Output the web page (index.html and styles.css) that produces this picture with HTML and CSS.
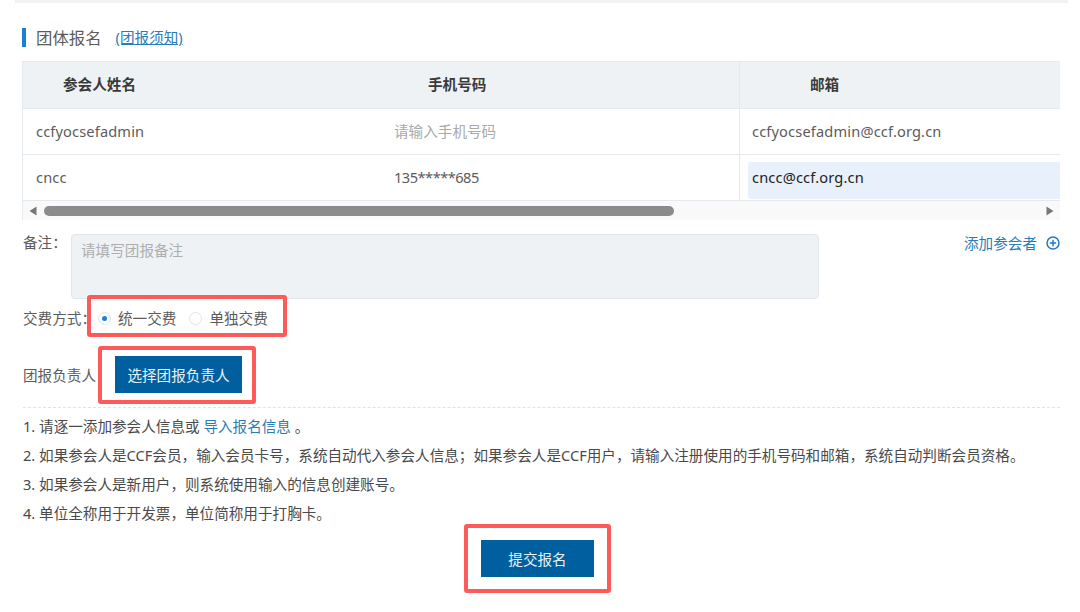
FILE: index.html
```html
<!DOCTYPE html>
<html lang="zh-CN">
<head>
<meta charset="utf-8">
<title>团体报名</title>
<link rel="stylesheet" href="styles.css">
</head>
<body>
<main class="page">
  <div class="top-rule"></div>
  <div class="content">
    <h2 class="section-title"><span class="title-text">团体报名</span><a class="notice-link" href="#">(团报须知)</a></h2>

    <div class="table">
      <div class="row head">
        <div class="cell name">参会人姓名</div>
        <div class="cell phone">手机号码</div>
        <div class="cell email">邮箱</div>
      </div>
      <div class="row">
        <div class="cell name">ccfyocsefadmin</div>
        <div class="cell phone placeholder">请输入手机号码</div>
        <div class="cell email">ccfyocsefadmin@ccf.org.cn</div>
      </div>
      <div class="row">
        <div class="cell name">cncc</div>
        <div class="cell phone masked-number">135*****685</div>
        <div class="cell email"><span class="autofill">cncc@ccf.org.cn</span></div>
      </div>
      <div class="scrollbar">
        <svg class="arrow" width="8" height="10" viewBox="0 0 8 10"><path d="M7.5 0.5V9.5L0.5 5Z" fill="#777"/></svg>
        <div class="thumb"></div>
        <svg class="arrow" width="8" height="10" viewBox="0 0 8 10"><path d="M0.5 0.5V9.5L7.5 5Z" fill="#777"/></svg>
      </div>
    </div>

    <div class="remark-row">
      <span class="remark-label">备注&#65306;</span>
      <div class="remark-box">请填写团报备注</div>
      <a class="add-link" href="#">添加参会者
        <svg width="14" height="14" viewBox="0 0 14 14"><circle cx="7" cy="7" r="6" fill="none" stroke="#1f7bc4" stroke-width="1.5"/><path d="M3.8 7H10.2M7 3.8V10.2" stroke="#1f7bc4" stroke-width="1.5"/></svg>
      </a>
    </div>

    <div class="pay-row">
      <span class="pay-label">交费方式&#65306;</span>
      <div class="radios marked">
        <span class="radio checked"></span><span class="radio-text first">统一交费</span>
        <span class="radio"></span><span class="radio-text">单独交费</span>
      </div>
    </div>

    <div class="leader-row">
      <span class="leader-label">团报负责人</span>
      <button class="btn leader-btn marked" type="button">选择团报负责人</button>
    </div>

    <ol class="notes">
      <li>1. 请逐一添加参会人信息或 <a href="#">导入报名信息</a> 。</li>
      <li>2. 如果参会人是CCF会员&#65292;输入会员卡号&#65292;系统自动代入参会人信息&#65307;如果参会人是CCF用户&#65292;请输入注册使用的手机号码和邮箱&#65292;系统自动判断会员资格。</li>
      <li>3. 如果参会人是新用户&#65292;则系统使用输入的信息创建账号。</li>
      <li>4. 单位全称用于开发票&#65292;单位简称用于打胸卡。</li>
    </ol>

    <div class="submit-row">
      <button class="btn submit-btn marked" type="button">提交报名</button>
    </div>
  </div>
</main>
</body>
</html>
```
FILE: styles.css
```css
* { box-sizing: border-box; }
html, body { margin: 0; height: 612px; overflow: hidden; background: #fff; }
body {
  font-family: "Noto Sans", "Noto Sans CJK SC", sans-serif;
  font-size: 14.6px;
  line-height: 20px;
  color: #5c5c5c;
}
a { color: #2a7cb4; text-decoration: none; }

.page { padding-left: 15px; padding-right: 12px; }
.top-rule { height: 3px; background: #f1f2f4; }
.content { padding: 25px 8px 0 8px; }

.section-title {
  display: flex; align-items: center; height: 19px; margin: 0 0 0 -1px;
  font-weight: 400; font-size: 16.4px; line-height: 19px;
  border-left: 4px solid #1c7fd6; padding-left: 10px;
}
.notice-link { margin-left: 14px; font-size: 14.6px; text-decoration: underline; color: #2a7cb4; }

.table { margin: 14px 0 0 -1px; width: 1038px; border-left: 1px solid #e6eaf1; }
.row {
  display: grid; grid-template-columns: 358px 358px 1fr;
  height: 46px; border-bottom: 1px solid #e4e8ef;
}
.cell { display: flex; align-items: center; height: 100%; padding-bottom: 2px; }
.cell.email { border-left: 1px solid #e4e8ef; padding-left: 12px; letter-spacing: .16px; }
.cell.name { padding-left: 13px; letter-spacing: .15px; }
.cell.phone { padding-left: 13px; }
.masked-number { letter-spacing: -.5px; }
.placeholder { color: #a9a9a9; }
.head { height: 48px; background: #eff2f5; border-top: 1px solid #e6eaf1; font-weight: 700; color: #3a3a3a; }
.head .cell.name { padding-left: 40px; letter-spacing: 0; }
.head .cell.phone { padding-left: 47px; }
.head .cell.email { padding-left: 70px; letter-spacing: 0; }

.autofill {
  display: flex; align-items: center; flex: 1; align-self: flex-start; height: 37px; margin: 7px 0 0 -4px;
  padding: 0 0 7px 4px; background: #e8f0fb; border-radius: 3px 0 0 3px; color: #222;
}

.scrollbar {
  display: flex; align-items: center; height: 19px; background: #f9f9f9; padding: 0 6px;
}
.thumb { width: 630px; height: 10px; margin-left: 7px; margin-right: auto; border-radius: 5px; background: #8b8b8b; }

.remark-row { display: flex; align-items: flex-start; margin-top: 14px; }
.remark-label { width: 48px; margin-top: -2px; }
.remark-box {
  width: 748px; height: 65px; padding: 5px 9px;
  background: #eff2f5; border: 1px solid #e2e6ec; border-radius: 4px; color: #aeaeae;
}
.add-link { display: flex; align-items: center; gap: 9px; margin-left: auto; margin-top: -1px; color: #2a7cb4; height: 20px; }

.pay-row { display: flex; align-items: center; margin-top: 9px; height: 20px; }
.pay-label { width: 75px; white-space: nowrap; }
.radios { display: flex; align-items: center; }
.marked { position: relative; }
.marked::after {
  content: ""; position: absolute; border: 4px solid #ff5a5a; border-radius: 3px; pointer-events: none;
}
.radios::after { left: -11px; right: -19px; top: -13px; bottom: -9px; }
.radio {
  width: 13px; height: 13px; border-radius: 50%; border: 1px solid #e0e4ea; background: #fff;
  display: flex; align-items: center; justify-content: center; flex: none;
}
.radio.checked::before { content: ""; width: 5px; height: 5px; border-radius: 50%; background: #1c7fd6; }
.radio-text { margin-left: 7px; }
.radio-text.first { margin-right: 13px; }

.leader-row { display: flex; align-items: center; margin-top: 28px; }
.leader-label { width: 92px; }
.btn {
  display: block; border: 0; border-radius: 0; padding: 0; background: #00609f; color: #e9f1f7;
  font: inherit; text-align: center;
}
.leader-btn { width: 127px; height: 37px; }
.leader-btn::after { left: -17px; right: -14px; top: -10px; bottom: -11px; }

.notes {
  list-style: none; margin: 14px 0 0; padding: 8px 0 0;
  border-top: 1px dashed #dfe2e6; color: #4a4a4a;
}
.notes li { height: 29px; line-height: 20px; white-space: nowrap; }

.submit-row { display: flex; justify-content: center; margin-top: 8px; padding-right: 8px; }
.submit-btn { width: 113px; height: 37px; }
.submit-btn::after { left: -17px; right: -17px; top: -16px; bottom: -16px; }
```
